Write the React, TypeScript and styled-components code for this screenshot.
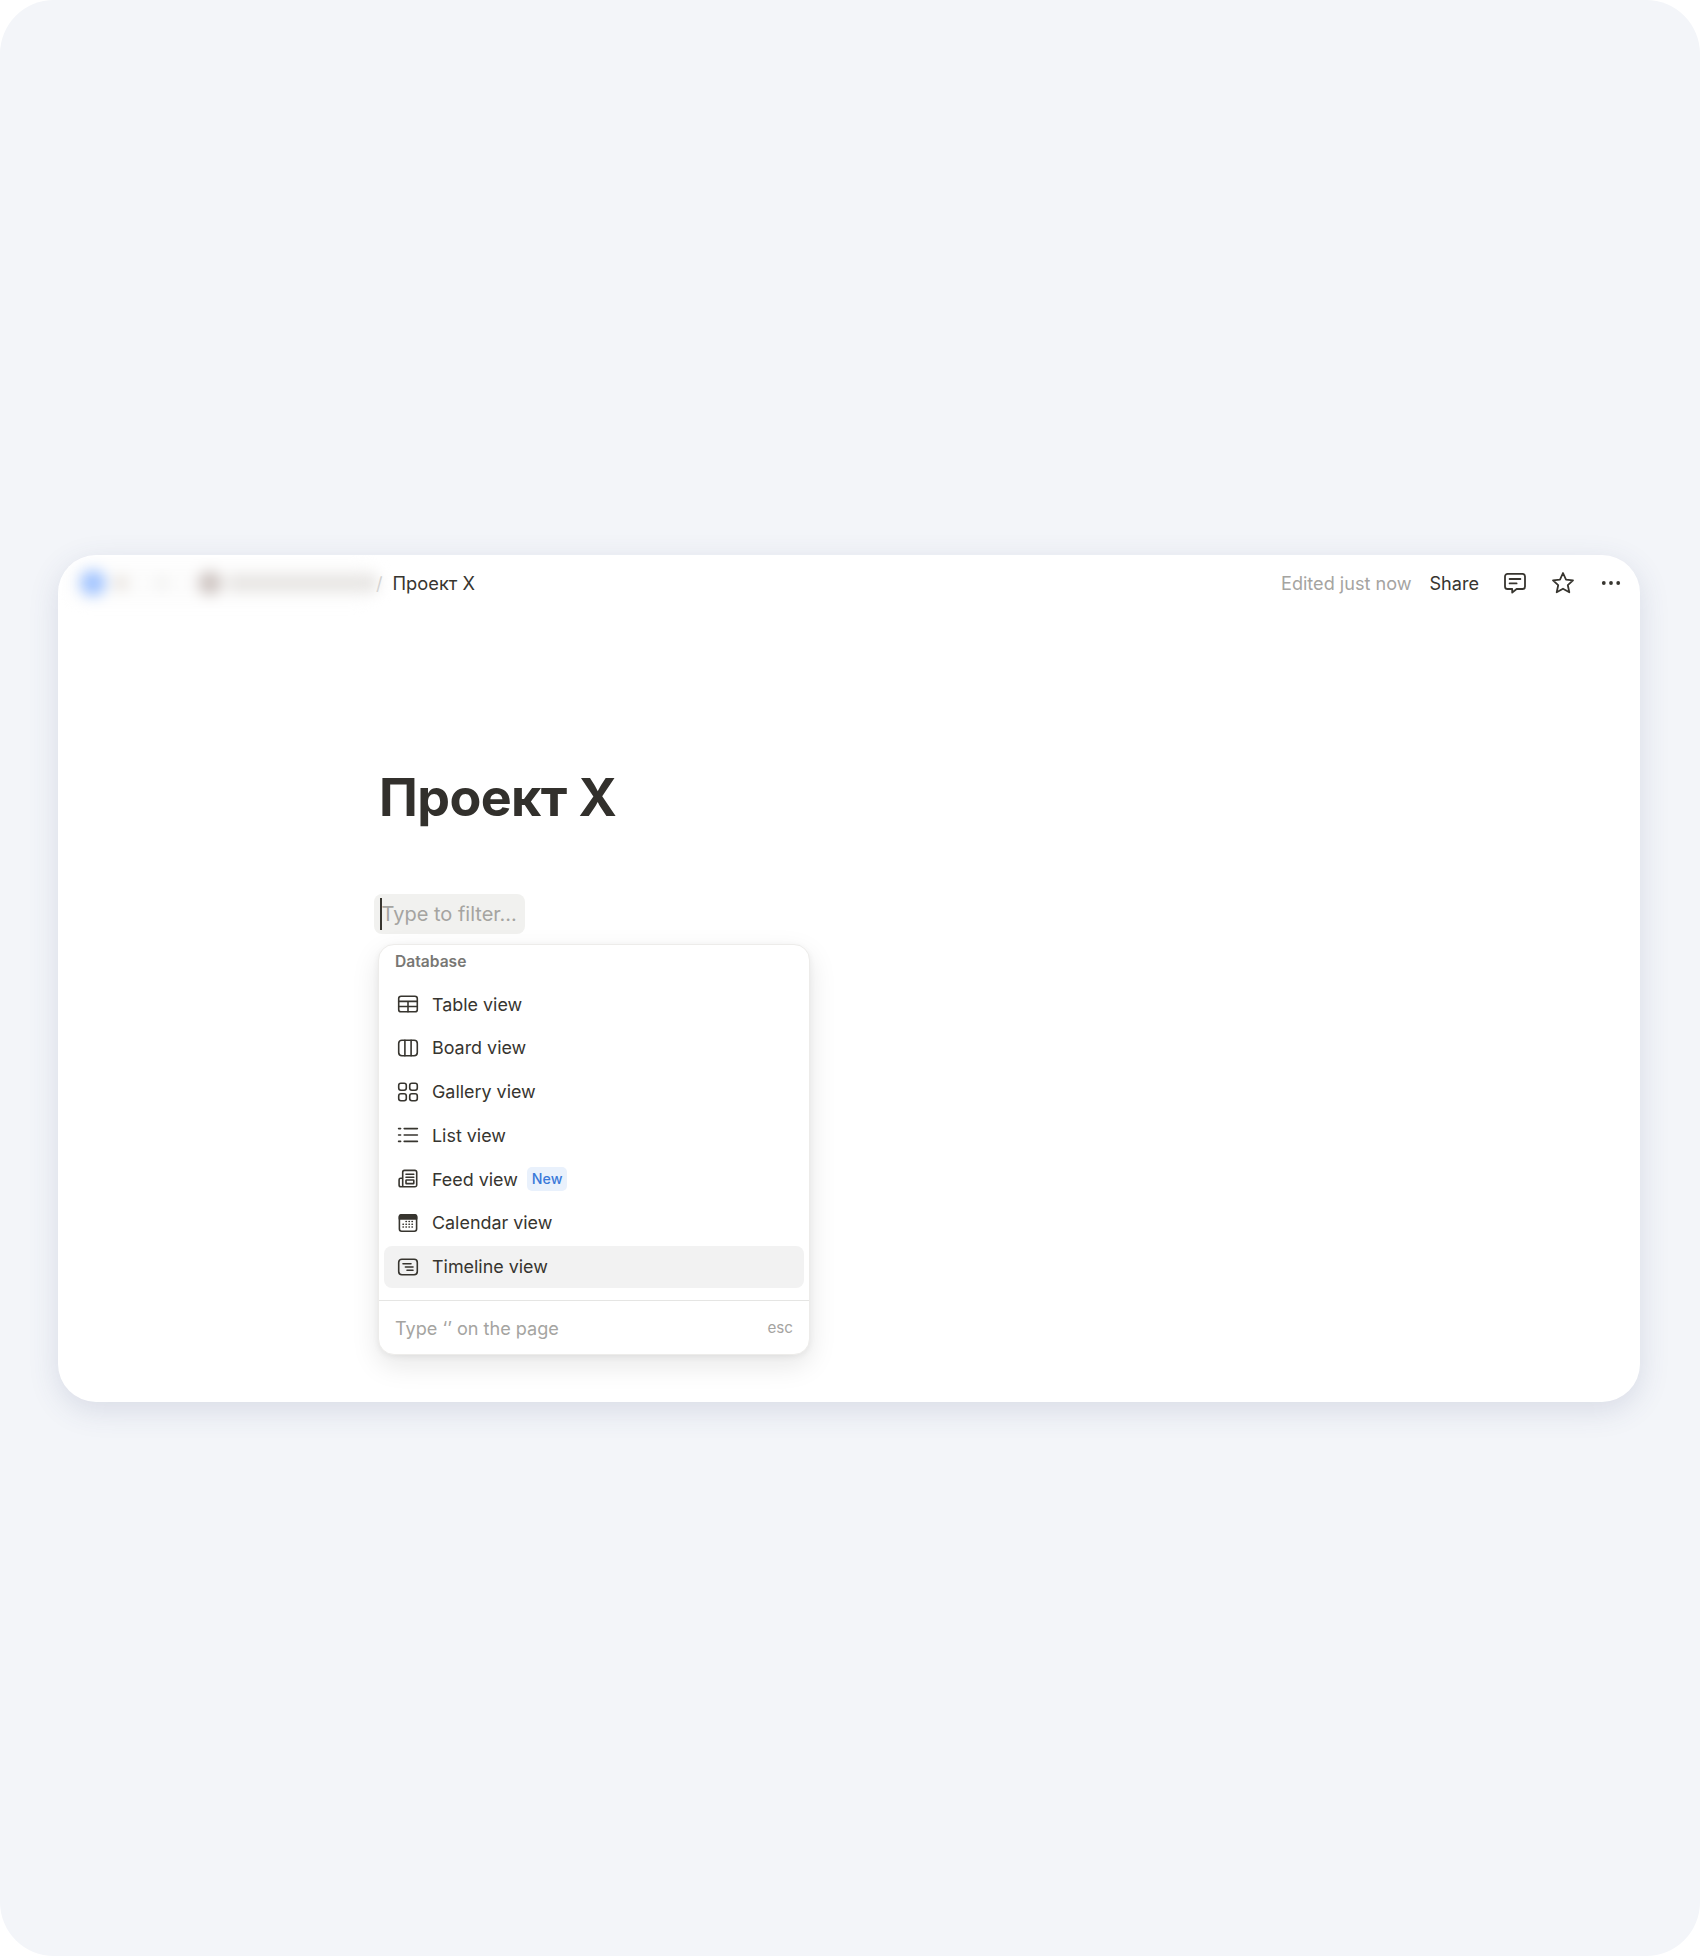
import styled, { createGlobalStyle } from 'styled-components';

const GlobalStyle = createGlobalStyle`
  html, body {
    margin: 0;
    padding: 0;
    background: #fff;
  }
`;

const Page = styled.div`
  box-sizing: border-box;
  width: 1700px;
  height: 1956px;
  padding: 555px 60px 0 58px;
  border-radius: 54px;
  background: #f3f5f9;
  font-family: Inter, "Liberation Sans", sans-serif;
  color: #37352f;
`;

const Card = styled.div`
  height: 847px;
  border-radius: 38px;
  background: #fff;
  box-shadow: 0 8px 30px rgba(60, 75, 120, 0.15);
  overflow: hidden;
`;

const TopBar = styled.div`
  display: flex;
  align-items: center;
  height: 55px;
  padding: 0 17px 0 10px;
  font-size: 18.1px;
`;

const Blurred = styled.div`
  display: flex;
  align-items: center;
  width: 306px;
  height: 40px;
  border-radius: 12px;
  background: #fcfcfc;
  filter: blur(7px);
  flex: none;
`;

const Blob = styled.span<{ $size: number; $color: string; $left: number }>`
  flex: none;
  width: ${(p) => p.$size}px;
  height: ${(p) => p.$size}px;
  margin-left: ${(p) => p.$left}px;
  border-radius: 50%;
  background: ${(p) => p.$color};
`;

const BlurLine = styled.span`
  flex: none;
  width: 150px;
  height: 18px;
  margin-left: 6px;
  border-radius: 4px;
  background: #e8e6e4;
`;

const Slash = styled.span`
  margin-left: 2px;
  color: #c9c8c5;
`;

const Crumb = styled.span`
  margin-left: 10px;
  font-size: 18.3px;
`;

const Spacer = styled.div`
  flex: 1;
`;

const Edited = styled.span`
  color: #a5a4a1;
`;

const Share = styled.span`
  margin-left: 18px;
  margin-right: 24px;
`;

const ActionIcon = styled.svg<{ $gap?: number }>`
  display: block;
  flex: none;
  margin-left: ${(p) => p.$gap ?? 0}px;
  fill: none;
  stroke: #37352f;
  stroke-width: 1.8;
  stroke-linejoin: round;
  stroke-linecap: round;
`;

const Content = styled.div`
  padding: 0 0 0 321px;
`;

const Title = styled.h1`
  margin: 0;
  padding-top: 158px;
  font-size: 52px;
  line-height: 60px;
  font-weight: 700;
  letter-spacing: -0.6px;
  color: #32302c;
`;

const FilterBox = styled.div`
  display: flex;
  align-items: center;
  box-sizing: border-box;
  width: 151px;
  height: 40px;
  margin-top: 66px;
  margin-left: -5px;
  padding-left: 6px;
  border-radius: 8px;
  background: #f1f1ef;
  font-size: 20px;
  color: #a5a4a1;
`;

const Caret = styled.span`
  flex: none;
  width: 1.5px;
  height: 32px;
  background: #37352f;
`;

const Menu = styled.div`
  box-sizing: border-box;
  width: 432px;
  height: 411px;
  margin-top: 10px;
  margin-left: -1px;
  border: 1px solid #edecea;
  border-radius: 16px;
  background: #fff;
  box-shadow: 0 10px 28px rgba(15, 15, 15, 0.1), 0 2px 6px rgba(15, 15, 15, 0.06);
`;

const Heading = styled.div`
  height: 34px;
  padding: 0 16px;
  font-size: 15.6px;
  font-weight: 600;
  line-height: 34px;
  color: #787774;
`;

const Rows = styled.div`
  display: flex;
  flex-direction: column;
  gap: 1.8px;
  padding: 4px 5px 0;
`;

const Row = styled.div<{ $active?: boolean }>`
  display: flex;
  align-items: center;
  gap: 13px;
  height: 42px;
  padding-left: 13px;
  border-radius: 8px;
  background: ${(p) => (p.$active ? '#f2f2f2' : 'transparent')};
  font-size: 17.9px;
`;

const RowIcon = styled.svg`
  display: block;
  flex: none;
  width: 22px;
  height: 22px;
  fill: none;
  stroke: #37352f;
  stroke-width: 1.6;
  stroke-linecap: round;
  stroke-linejoin: round;
`;

const Badge = styled.span`
  margin-left: -4px;
  padding: 0 5px;
  height: 24px;
  border-radius: 5px;
  background: #e9f1fc;
  color: #3a79d9;
  font-size: 14.2px;
  font-weight: 500;
  line-height: 24px;
`;

const Footer = styled.div`
  display: flex;
  align-items: center;
  justify-content: space-between;
  height: 54px;
  margin-top: 12px;
  padding: 0 16px;
  border-top: 1px solid #e5e5e3;
  color: #a5a4a1;
  font-size: 18.1px;
`;

const Esc = styled.span`
  font-size: 15.2px;
`;

const TableIcon = () => (
  <RowIcon viewBox="0 0 22 22">
    <rect x="1.7" y="3.2" width="18.6" height="15.6" rx="2.4" />
    <path d="M1.700 8.400h18.600M1.700 13.500h18.600M11 8.400v10.400" />
  </RowIcon>
);

const BoardIcon = () => (
  <RowIcon viewBox="0 0 22 22">
    <rect x="1.7" y="3.2" width="18.6" height="15.6" rx="3.2" />
    <path d="M7.900 3.200v15.600M14.100 3.200v15.600" />
  </RowIcon>
);

const GalleryIcon = () => (
  <RowIcon viewBox="0 0 22 22">
    <rect x="1.7" y="2.2" width="7.6" height="7" rx="2.2" />
    <rect x="12.7" y="2.2" width="7.6" height="7" rx="2.2" />
    <rect x="1.7" y="12.8" width="7.6" height="7" rx="2.2" />
    <rect x="12.7" y="12.8" width="7.6" height="7" rx="2.2" />
  </RowIcon>
);

const ListIcon = () => (
  <RowIcon viewBox="0 0 22 22">
    <path d="M7.200 4.600h13.200M7.200 11h13.200M7.200 17.400h13.200" />
    <path d="M1.600 4.600h2M1.600 11h2M1.600 17.400h2" />
  </RowIcon>
);

const FeedIcon = () => (
  <RowIcon viewBox="0 0 22 22">
    <path d="M5.700 18.800V4.200a1.800 1.800 0 0 1 1.800-1.800h10.400a1.800 1.800 0 0 1 1.800 1.800v12.800a1.800 1.800 0 0 1-1.800 1.800H4a1.900 1.900 0 0 1-1.900-1.900v-5.200a1.500 1.500 0 0 1 1.500-1.500h2.100" />
    <path d="M9 6.200h7.800M9 9.200h7.800" />
    <rect x="9" y="12" width="7.8" height="3.6" rx="0.4" />
  </RowIcon>
);

const CalendarIcon = () => (
  <RowIcon viewBox="0 0 22 22">
    <rect x="2.4" y="2.7" width="17.2" height="16.6" rx="2.2" />
    <path d="M2.400 5a2.200 2.200 0 0 1 2.200-2.300h12.800A2.200 2.200 0 0 1 19.600 5v2H2.400z" fill="#37352f" />
    <path
      d="M9 9.400h.4M12 9.400h.4M15 9.400h.4M6 12.200h.4M9 12.200h.4M12 12.200h.4M15 12.200h.4M6 15h.4M9 15h.4M12 15h.4M15 15h.4"
      strokeWidth="1.5"
    />
  </RowIcon>
);

const TimelineIcon = () => (
  <RowIcon viewBox="0 0 22 22">
    <rect x="1.700" y="3.200" width="18.600" height="15.600" rx="3.200" />
    <path d="M6 7.800h8M8.400 11h7.600M10 14.200h6" />
  </RowIcon>
);

const views = [
  { label: 'Table view', icon: <TableIcon /> },
  { label: 'Board view', icon: <BoardIcon /> },
  { label: 'Gallery view', icon: <GalleryIcon /> },
  { label: 'List view', icon: <ListIcon /> },
  { label: 'Feed view', icon: <FeedIcon />, isNew: true },
  { label: 'Calendar view', icon: <CalendarIcon /> },
  { label: 'Timeline view', icon: <TimelineIcon />, active: true },
];

const App = () => (
  <Page>
    <GlobalStyle />
    <Card>
      <TopBar>
        <Blurred>
          <Blob $size={26} $color="#a3c5ff" $left={12} />
          <Blob $size={14} $color="#e6e0da" $left={8} />
          <Blob $size={12} $color="#efefed" $left={28} />
          <Blob $size={24} $color="#cfc6c3" $left={30} />
          <BlurLine />
        </Blurred>
        <Slash>/</Slash>
        <Crumb>Проект X</Crumb>
        <Spacer />
        <Edited>Edited just now</Edited>
        <Share>Share</Share>
        <ActionIcon width="24" height="24" viewBox="0 0 24 24">
          <path d="M4.600 2.800h14.800a2.600 2.600 0 0 1 2.600 2.600v10a2.600 2.600 0 0 1-2.600 2.600h-5.800l-4.400 3.600v-3.600H4.600A2.600 2.600 0 0 1 2 15.400v-10a2.600 2.600 0 0 1 2.600-2.600z" />
          <path d="M6.600 8h10.800M6.600 12.400h7" />
        </ActionIcon>
        <ActionIcon width="24" height="24" viewBox="0 0 24 24" $gap={24}>
          <path d="M12 2l3 6.600 7 .8-5.200 4.800 1.500 7.100L12 17.700 5.700 21.300l1.500-7.100L2 9.400l7-.8z" />
        </ActionIcon>
        <ActionIcon width="24" height="24" viewBox="0 0 24 24" $gap={24}>
          <g fill="#37352f" stroke="none">
            <circle cx="4.800" cy="12" r="1.900" />
            <circle cx="12" cy="12" r="1.900" />
            <circle cx="19.200" cy="12" r="1.900" />
          </g>
        </ActionIcon>
      </TopBar>
      <Content>
        <Title>Проект X</Title>
        <FilterBox>
          <Caret />
          Type to filter...
        </FilterBox>
        <Menu>
          <Heading>Database</Heading>
          <Rows>
            {views.map((view) => (
              <Row key={view.label} $active={view.active}>
                {view.icon}
                {view.label}
                {view.isNew && <Badge>New</Badge>}
              </Row>
            ))}
          </Rows>
          <Footer>
            <span>Type ‘’ on the page</span>
            <Esc>esc</Esc>
          </Footer>
        </Menu>
      </Content>
    </Card>
  </Page>
);

export default App;
